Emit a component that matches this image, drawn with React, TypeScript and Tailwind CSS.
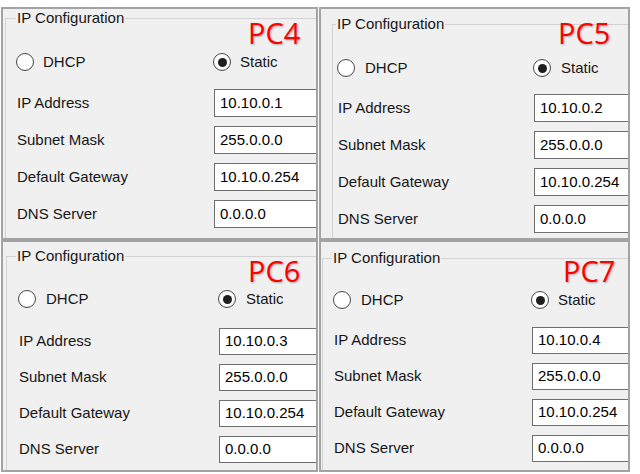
import React from 'react';

type PanelProps = {
  name: string;
  ip: string;
  box: string; // panel size/offset
  fieldset: string;
  legend: string;
  radioRow: string;
  dhcpWidth: string;
  dhcpGap: string;
  staticGap: string;
  rows: string;
  labelWidth: string;
  inputH: string;
  tag: string;
};

const font = "font-['Liberation_Sans',Arial,sans-serif]";

function Radio({ checked }: { checked?: boolean }) {
  return (
    <span className="flex h-[18px] w-[18px] shrink-0 items-center justify-center rounded-full border border-[#4a4a4a] bg-[radial-gradient(circle_at_50%_40%,#ffffff_55%,#e4e4e4)]">
      {checked && <span className="h-[9px] w-[9px] rounded-full bg-[#1e1e1e]" />}
    </span>
  );
}

function Panel(p: PanelProps) {
  const fields = [
    ['IP Address', p.ip],
    ['Subnet Mask', '255.0.0.0'],
    ['Default Gateway', '10.10.0.254'],
    ['DNS Server', '0.0.0.0'],
  ];

  return (
    <div className={`relative shrink-0 overflow-hidden border-2 border-[#a3a3a3] bg-[#f0f0f0] ${p.box}`}>
      <fieldset className={`h-[280px] w-[420px] border border-[#d2d2d2] p-0 ${p.fieldset}`}>
        <legend className={`px-[1px] text-[15px] leading-[18px] text-[#161616] ${p.legend}`}>IP Configuration</legend>

        {/* DHCP / Static */}
        <div className={`flex h-[20px] items-center text-[15px] text-[#161616] ${p.radioRow}`}>
          <div className={`flex items-center ${p.dhcpWidth} ${p.dhcpGap}`}>
            <Radio />
            <span>DHCP</span>
          </div>
          <div className={`flex items-center ${p.staticGap}`}>
            <Radio checked />
            <span>Static</span>
          </div>
        </div>

        <div className={`flex flex-col ${p.rows}`}>
          {fields.map(([label, value]) => (
            <div key={label} className={`flex items-center text-[15px] text-[#161616] ${p.inputH}`}>
              <span className={`shrink-0 ${p.labelWidth}`}>{label}</span>
              <div className="flex h-full w-[160px] items-center border border-[#6f6f6f] bg-white pl-[5px] text-black">
                {value}
              </div>
            </div>
          ))}
        </div>
      </fieldset>

      <span
        className={`absolute font-['Open_Sans',sans-serif] text-[29px] leading-[29px] font-medium text-[#ff0000] [text-shadow:1px_1px_2px_rgba(0,0,0,0.3)] ${p.tag}`}
      >
        {p.name}
      </span>
    </div>
  );
}

export default function App() {
  return (
    <div className={`h-[474px] w-[640px] overflow-hidden bg-white ${font}`}>
      <div className="flex">
        <Panel
          name="PC4"
          ip="10.10.0.1"
          box="ml-[1px] mt-[7px] w-[317px] h-[233px]"
          fieldset="ml-[2px]"
          legend="ml-[10px]"
          radioRow="mt-[25px] pl-[10px]"
          dhcpWidth="w-[197px]"
          dhcpGap="gap-[9px]"
          staticGap="gap-[9px]"
          rows="mt-[17px] pl-[11px] gap-[9px]"
          labelWidth="w-[197px]"
          inputH="h-[28px]"
          tag="left-[245px] top-[9px]"
        />
        <Panel
          name="PC5"
          ip="10.10.0.2"
          box="ml-[1px] mt-[7px] w-[311px] h-[233px]"
          fieldset="ml-[11px] mt-[6px]"
          legend="ml-[3px]"
          radioRow="mt-[25px] pl-[4px]"
          dhcpWidth="w-[196px]"
          dhcpGap="gap-[10px]"
          staticGap="gap-[10px]"
          rows="mt-[16px] pl-[5px] gap-[9px]"
          labelWidth="w-[196px]"
          inputH="h-[28px]"
          tag="left-[237px] top-[9px]"
        />
      </div>
      <div className="flex">
        <Panel
          name="PC6"
          ip="10.10.0.3"
          box="ml-[1px] w-[317px] h-[232px]"
          fieldset="ml-[3px] mt-[5px]"
          legend="ml-[9px]"
          radioRow="mt-[24px] pl-[11px]"
          dhcpWidth="w-[200px]"
          dhcpGap="gap-[10px]"
          staticGap="gap-[10px]"
          rows="mt-[19px] pl-[12px] gap-[9px]"
          labelWidth="w-[200px]"
          inputH="h-[27px]"
          tag="left-[245px] top-[14px]"
        />
        <Panel
          name="PC7"
          ip="10.10.0.4"
          box="ml-[1px] w-[311px] h-[232px]"
          fieldset="ml-[1px] mt-[7px]"
          legend="ml-[9px]"
          radioRow="mt-[23px] pl-[10px]"
          dhcpWidth="w-[198px]"
          dhcpGap="gap-[10px]"
          staticGap="gap-[9px]"
          rows="mt-[17px] pl-[11px] gap-[9px]"
          labelWidth="w-[198px]"
          inputH="h-[27px]"
          tag="left-[242px] top-[14px]"
        />
      </div>
    </div>
  );
}
